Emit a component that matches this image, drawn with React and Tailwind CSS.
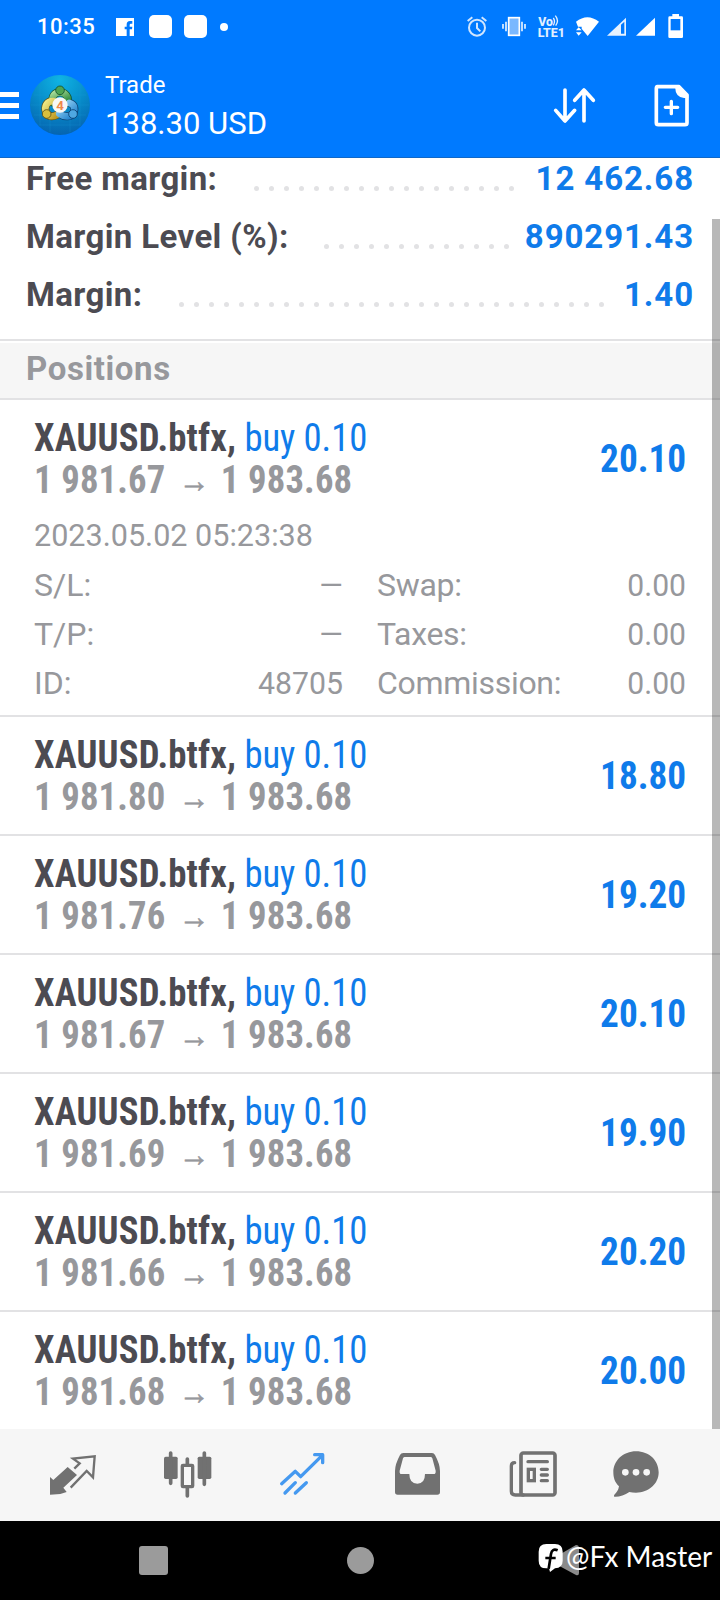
import React from 'react';

const summary = [
    { label: 'Free margin:', value: '12 462.68', dots: 18, width: 'w-[180px]' },
    { label: 'Margin Level (%):', value: '890291.43', dots: 13, width: 'w-[185px]' },
    { label: 'Margin:', value: '1.40', dots: 29, width: 'w-[90px]' },
];

const positions = [
    {
        id: 1, open: '1 981.67', profit: '20.10', time: '2023.05.02 05:23:38',
        details: [
            ['S/L:', '—', 'Swap:', '0.00'],
            ['T/P:', '—', 'Taxes:', '0.00'],
            ['ID:', '48705', 'Commission:', '0.00'],
        ],
    },
    { id: 2, open: '1 981.80', profit: '18.80' },
    { id: 3, open: '1 981.76', profit: '19.20' },
    { id: 4, open: '1 981.67', profit: '20.10' },
    { id: 5, open: '1 981.69', profit: '19.90' },
    { id: 6, open: '1 981.66', profit: '20.20' },
    { id: 7, open: '1 981.68', profit: '20.00' },
];

function StatusBar() {
    return (
        <div className="flex h-[53px] items-center pl-[37px] text-white">
            <span className="w-[79px] text-[22px] font-medium leading-[54px] tracking-[0.5px]">10:35</span>
            <svg className="h-[18px] w-[18px]" viewBox="0 0 54 54" fill="#fff">
                <path d="M0 0H54V54H41V34H48L49 26H41V21Q41 17 45 17H49V9H42Q32 9 32 20V26H26V34H32V54H0Z" />
            </svg>
            <span className="ml-[15px] h-[23px] w-[23px] rounded-[5px] bg-white"></span>
            <span className="ml-3 h-[23px] w-[23px] rounded-[5px] bg-white"></span>
            <span className="ml-[13px] h-2 w-2 rounded-full bg-white"></span>

            <svg className="ml-[239px] h-[21px] w-5" viewBox="321 48 60 63" fill="none" stroke="#cfe5ff" strokeWidth="6">
                <circle cx="351" cy="83" r="24" />
                <path d="M351 68V84L361 94M323 63L337 52M379 63L365 52" />
            </svg>
            <svg className="ml-[15px] h-[21px] w-6" viewBox="426 48 72 63" fill="none" stroke="#e6f2ff" strokeWidth="5">
                <rect x="446" y="53" width="32" height="53" fill="#7ab8ff" stroke="#fff" strokeWidth="5" />
                <path d="M429 72V86M438 65V94M486 65V94M495 72V86" />
            </svg>
            <svg className="ml-3 h-[25px] w-[27px]" viewBox="534 42 81 75" fill="#e2f0ff">
                <path d="M580 54Q587 64 580 76M586 47Q598 62 587 77" fill="none" stroke="#e2f0ff" strokeWidth="4" />
                <text fontSize="37" fontWeight="800" fontFamily="Roboto, sans-serif">
                    <tspan x="535" y="77" textLength="44" lengthAdjust="spacingAndGlyphs">Vo</tspan>
                    <tspan x="533" y="112" textLength="82" lengthAdjust="spacingAndGlyphs">LTE1</tspan>
                </text>
            </svg>
            <svg className="ml-[10px] h-[21px] w-6" viewBox="645 48 72 63" fill="#fff">
                <path d="M648 65Q682 38 717 65L683 108L665 86V80H654Z" />
                <path d="M648 91L656 82L665 91ZM648 97H665L656 107Z" />
            </svg>
            <svg className="ml-2 h-[21px] w-5" viewBox="741 48 60 63" fill="#e6f2ff">
                <path d="M741 107L798 53V107Z" />
                <path d="M783 74L793 65V101H783Z" fill="#007aff" />
            </svg>
            <svg className="ml-[9px] h-[21px] w-5" viewBox="828 48 60 63" fill="#fff">
                <path d="M828 107L885 53V107Z" />
            </svg>
            <svg className="ml-3 h-[25px] w-[15px]" viewBox="924 42 45 75" fill="#fff">
                <path d="M937 42H957V49H965Q969 49 969 53V110Q969 114 965 114H929Q925 114 925 110V53Q925 49 929 49H937Z" />
                <rect x="932" y="57" width="29" height="34" fill="#007aff" />
            </svg>
        </div>
    );
}

function Logo() {
    return (
        <svg className="ml-[11px] h-[60px] w-[60px]" viewBox="0 0 180 180">
            <defs>
                <radialGradient id="sky" cx="50%" cy="8%" r="95%">
                    <stop offset="0" stopColor="#0fb4e4" />
                    <stop offset="0.5" stopColor="#078cc9" />
                    <stop offset="1" stopColor="#0561ae" />
                </radialGradient>
                <linearGradient id="green" x1="0" y1="0" x2="0.6" y2="1">
                    <stop offset="0" stopColor="#a9dd98" />
                    <stop offset="1" stopColor="#2f8a40" />
                </linearGradient>
                <linearGradient id="gold" x1="0" y1="0" x2="1" y2="1">
                    <stop offset="0" stopColor="#f1ea86" />
                    <stop offset="1" stopColor="#c09a22" />
                </linearGradient>
                <linearGradient id="azure" x1="0" y1="0" x2="1" y2="1">
                    <stop offset="0" stopColor="#a3daf8" />
                    <stop offset="1" stopColor="#1c7fcb" />
                </linearGradient>
            </defs>
            <circle cx="90" cy="90" r="90" fill="url(#sky)" />
            <path d="M12 60H168M2 90H178M12 120H168M28 150H152M30 28V152M60 8V172M120 8V172M150 28V152" stroke="#1aa0da" strokeOpacity="0.35" strokeWidth="2" />
            <g fill="none" strokeLinecap="round">
                <path d="M69 82C64 64 74 52 90 52S118 66 112 84" stroke="#14512c" strokeWidth="24" />
                <path d="M70 78C50 78 42 94 48 112C54 126 68 126 80 120" stroke="#5f5216" strokeWidth="24" />
                <path d="M118 84C134 88 136 102 130 114C122 128 102 126 88 116" stroke="#0b3f70" strokeWidth="24" />
                <path d="M69 82C64 64 74 52 90 52S118 66 112 84" stroke="url(#green)" strokeWidth="20" />
                <path d="M70 78C50 78 42 94 48 112C54 126 68 126 80 120" stroke="url(#gold)" strokeWidth="20" />
                <path d="M118 84C134 88 136 102 130 114C122 128 102 126 88 116" stroke="url(#azure)" strokeWidth="20" />
            </g>
            <circle cx="90" cy="46" r="13" fill="#4fa552" stroke="#14512c" strokeWidth="2.500" />
            <circle cx="50" cy="117" r="13" fill="#d9bf3c" stroke="#5f5216" strokeWidth="2.500" />
            <circle cx="129" cy="117" r="13" fill="#4ea8e2" stroke="#0b3f70" strokeWidth="2.500" />
            <circle cx="90" cy="90" r="23" fill="#f8f8f6" />
            <text x="90" y="104" textAnchor="middle" fontSize="40" fontWeight="700" fontFamily="Roboto, sans-serif" fill="#f0894a">4</text>
        </svg>
    );
}

function AppBar() {
    return (
        <div className="flex h-[105px] items-center border-b border-[#1068c8] text-white">
            <div className="flex w-[19px] flex-col gap-[6px]">
                <span className="h-[5px] bg-white"></span>
                <span className="h-[5px] bg-white"></span>
                <span className="h-[5px] bg-white"></span>
            </div>
            <Logo />
            <div className="ml-[15px] w-[448px] pt-1">
                <div className="text-[24px] leading-[32px]">Trade</div>
                <div className="origin-left scale-x-[.97] text-[32px] leading-[44px]">138.30 USD</div>
            </div>
            <svg className="h-[37px] w-[43px]" viewBox="579 261 129 111" fill="none" stroke="#fff" strokeWidth="11" strokeLinecap="round" strokeLinejoin="round">
                <path d="M615 270V362M587 331L615 363L644 331M672 363V270M644 301L672 270L700 301" />
            </svg>
            <svg className="ml-[58px] h-[43px] w-[35px]" viewBox="882 252 105 129" fill="none" stroke="#fff" strokeLinejoin="round">
                <path d="M892 260H957L981 285V368Q981 374 975 374H895Q889 374 889 368V266Q889 260 892 260Z" strokeWidth="11" />
                <path d="M946 258H958L985 284V294H972Q946 291 946 265Z" fill="#fff" stroke="none" />
                <path d="M934 304V341M916 322H953" strokeWidth="10" strokeLinecap="round" />
            </svg>
        </div>
    );
}

function SummaryRow({ row }) {
    return (
        <div className="flex h-[58px] pl-[26px] pr-[26px] text-[33px] font-bold leading-[58px]">
            <span className="tracking-[0.38px] text-[#4c4b52]">{row.label}</span>
            <div className="ml-auto flex gap-[10px] pt-[36px]">
                {Array.from({ length: row.dots }, (_, i) => (
                    <span key={i} className="h-[5px] w-[5px] rounded-full bg-[#e2e2e4]"></span>
                ))}
            </div>
            <span className={`${row.width} text-right tracking-[0.9px] text-[#0f7bea]`}>{row.value}</span>
        </div>
    );
}

function Position({ item }) {
    return (
        <div className="border-b-2 border-[#e2e2e4] pl-[34px] pr-[34px] last:border-b-0">
            <div className="flex h-[117px] items-center justify-between font-['Roboto_Condensed',Roboto,sans-serif]">
                <div className="origin-left scale-x-[.94]">
                    <div className="text-[39px] leading-[42px]">
                        <span className="tracking-[0.2px] font-bold text-[#4c4b52]">XAUUSD.btfx,</span>
                        <span className="tracking-[-0.1px] text-[#0f7bea]"> buy 0.10</span>
                    </div>
                    <div className="flex text-[39px] font-bold leading-[42px] text-[#97989c]">
                        <span className="tracking-[0.15px]">{item.open}</span>
                        <span className="ml-[14px] mr-3 pt-1 font-['Liberation_Sans',sans-serif] text-[33px] font-normal leading-[36px] [-webkit-text-stroke:0.6px_#97989c]">→</span>
                        <span className="tracking-[0.15px]">1 983.68</span>
                    </div>
                </div>
                <span className="mt-[2px] origin-right scale-x-[.955] text-[39px] font-bold text-[#0f7bea]">{item.profit}</span>
            </div>
            {item.details && (
                <div className="-mt-[6px] h-[204px] text-[32px] text-[#97989c]">
                    <div className="mb-px origin-left scale-x-[.955] leading-[49px]">{item.time}</div>
                    {item.details.map(([a, b, c, d]) => (
                        <div key={a} className="flex leading-[49px]">
                            <span>{a}</span>
                            <span className="ml-auto origin-right scale-x-[.945]">{b}</span>
                            <span className="ml-[34px] w-[200px] tracking-[-0.3px]">{c}</span>
                            <span className="w-[109px] origin-right scale-x-[.94] text-right">{d}</span>
                        </div>
                    ))}
                </div>
            )}
        </div>
    );
}

function TabBar() {
    return (
        <div className="flex h-[92px] bg-[#f6f6f6] pl-[49px] pt-[22px] text-[#717171]">
            <svg className="h-[47px] w-[47px]" viewBox="147 93 141 141">
                <path d="M150 171L160 180L203 141L231 165L190 203L200 216L181 222L150 224Z" fill="currentColor" />
                <path d="M223 146L239 130L219 116L284 109L279 172L260 153L212 203" fill="none" stroke="currentColor" strokeWidth="7" />
            </svg>
            <svg className="ml-[67px] h-[47px] w-[49px]" viewBox="489 93 147 141" fill="currentColor">
                <rect x="492" y="110" width="41" height="67" rx="5" />
                <rect x="593" y="110" width="41" height="67" rx="5" />
                <path d="M512 99V190M613 99V193M562 117V132M562 203V228" stroke="currentColor" strokeWidth="11" strokeLinecap="round" />
                <rect x="547" y="136" width="31" height="64" rx="2" fill="none" stroke="currentColor" strokeWidth="10" />
            </svg>
            <svg className="ml-[67px] h-[47px] w-[46px]" viewBox="837 93 138 141" fill="none" stroke="#4599f0" strokeWidth="10" strokeLinecap="round" strokeLinejoin="round">
                <path d="M845 191L886 154L902 170L966 107M944 104H968V128M855 219L886 188M886 219L919 188" />
            </svg>
            <svg className="ml-[69px] h-[47px] w-[47px]" viewBox="102 93 141 141" fill="currentColor" fillRule="evenodd">
                <path d="M130 99H216Q222 99 225 105Q240 133 240 153V216Q240 224 232 224H113Q105 224 105 216V153Q105 133 120 105Q123 99 130 99ZM134 111Q131 111 129 115L119 152Q118 162 124 162H148Q148 191 172 191Q195 191 195 162H221Q228 162 227 152L217 115Q215 111 212 111Z" />
            </svg>
            <svg className="ml-[68px] h-[47px] w-12" viewBox="447 93 144 141" fill="none" stroke="currentColor" strokeWidth="10" strokeLinecap="round">
                <rect x="483" y="99" width="102" height="126" rx="7" strokeWidth="11" />
                <path d="M464 128Q454 128 454 138V214Q454 225 466 225H490" />
                <path d="M504 125H562M544 148H562M544 165H562M544 182H562" />
                <rect x="505" y="148" width="18" height="34" />
            </svg>
            <svg className="ml-14 h-[47px] w-[46px]" viewBox="759 93 138 141" fill="currentColor">
                <path d="M828 94C868 94 896 122 896 157C896 192 866 218 828 218Q817 218 808 216Q786 231 763 230Q760 228 763 224Q775 213 777 199C764 187 760 172 760 157C760 122 790 94 828 94Z" />
                <g fill="#f6f6f6">
                    <circle cx="796" cy="157" r="10" />
                    <circle cx="828" cy="157" r="10" />
                    <circle cx="860" cy="157" r="10" />
                </g>
            </svg>
        </div>
    );
}

function SystemNav() {
    return (
        <div className="relative flex h-[79px] items-center bg-black pl-[139px]">
            <span className="h-[29px] w-[29px] rounded-[3px] bg-[#9b9b9b]"></span>
            <span className="ml-[179px] h-[27px] w-[27px] rounded-full bg-[#9b9b9b]"></span>
            <svg className="ml-[176px] h-[31px] w-[29px]" viewBox="0 0 29 31" fill="#8a8a8a">
                <path d="M2 14L26 0Q29 0 29 3V28Q29 31 26 30L2 17Q0 15.500 2 14Z" />
            </svg>
            <div className="absolute left-[538px] top-[20px] flex text-white">
                <svg className="mt-[3px] h-7 w-[25px]" viewBox="535 372 75 84">
                    <path d="M560 372H586Q609 372 609 395V422Q609 444 586 445L571 456L568 445H560Q537 445 537 422V395Q537 372 560 372Z" fill="#fff" />
                    <path d="M594 391Q577 384 574 402L567 446M557 414H588" fill="none" stroke="#000" strokeWidth="8" />
                </svg>
                <span className="ml-[3px] whitespace-nowrap font-[Lato,sans-serif] text-[28px] leading-[30px]">@Fx Master</span>
            </div>
        </div>
    );
}

export default function App() {
    return (
        <div className="relative h-[1600px] w-[720px] overflow-hidden bg-white font-[Roboto,sans-serif]">
            <div className="bg-[#007aff]">
                <StatusBar />
                <AppBar />
            </div>
            <div className="h-[183px] overflow-hidden border-b-2 border-[#e2e2e4]">
                <div className="-mt-2">
                    {summary.map((row) => (
                        <SummaryRow key={row.label} row={row} />
                    ))}
                </div>
            </div>
            <div className="mt-[2px] h-[57px] border-b-2 border-[#e2e2e4] bg-[#f6f6f6] pl-[26px] text-[33px] font-bold leading-[52px] tracking-[0.6px] text-[#97989c]">
                Positions
            </div>
            <div className="h-[1029px]">
                {positions.map((item) => (
                    <Position key={item.id} item={item} />
                ))}
            </div>
            <TabBar />
            <SystemNav />
            <div className="absolute right-0 top-[219px] h-[1210px] w-2 bg-black/[.28]"></div>
        </div>
    );
}
